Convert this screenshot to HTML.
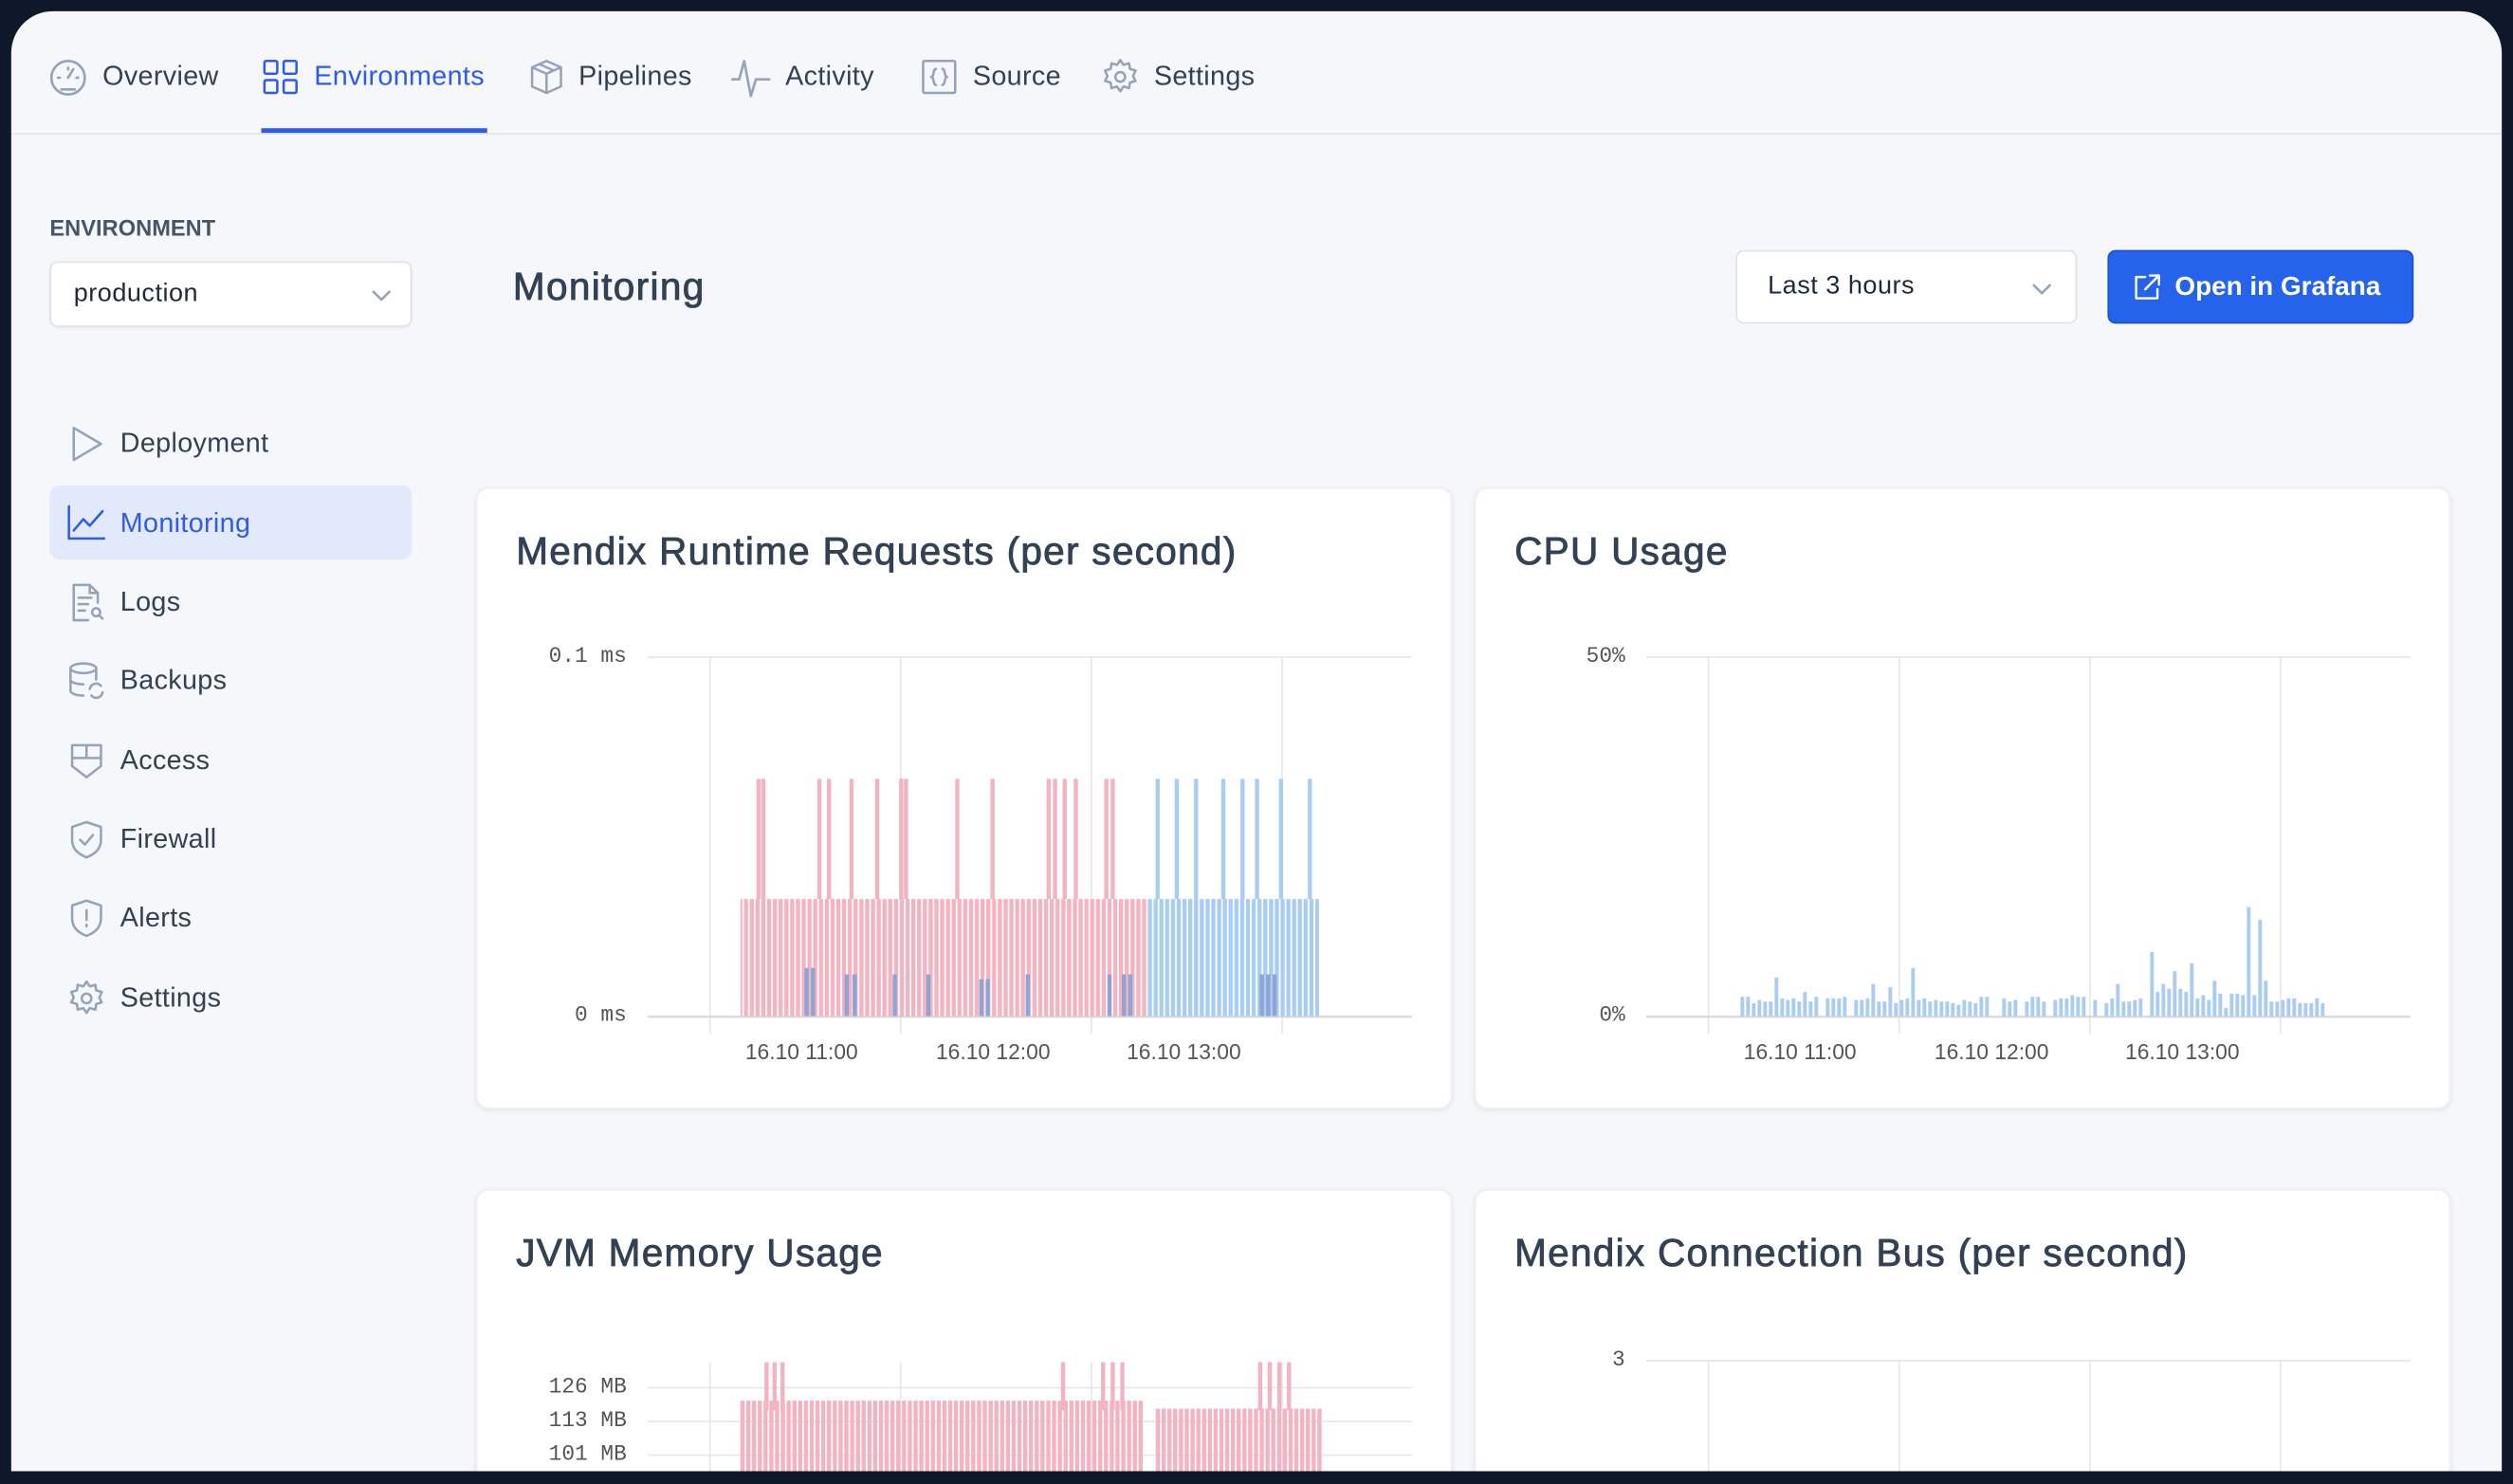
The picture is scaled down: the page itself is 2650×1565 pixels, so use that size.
<!DOCTYPE html>
<html><head><meta charset="utf-8"><style>
*{box-sizing:border-box;margin:0;padding:0}
html,body{width:2650px;height:1565px;overflow:hidden;background:#0f172a}
#s{position:absolute;left:0;top:0;width:1568px;height:926px;overflow:hidden;transform:scale(1.69005);transform-origin:0 0;font-family:"Liberation Sans",sans-serif;color:#334155}
#fr{position:absolute;left:7px;top:7px;width:1554px;height:911px;background:#f5f7fa;border-radius:26px 26px 0 0;overflow:hidden}
.a{position:absolute;white-space:nowrap}
.nav{font-size:17px;color:#334155;top:31px;letter-spacing:.2px}
.ic{position:absolute;fill:none;stroke:#94a3b8;stroke-width:1.5;stroke-linecap:round;stroke-linejoin:round}
.card{position:absolute;background:#fff;border-radius:8px;box-shadow:0 1px 3px rgba(15,23,42,.08);border:1px solid #eef0f3;overflow:hidden}
.ct{font-size:24px;color:#334155;position:absolute;left:24px;top:26px;letter-spacing:.75px;-webkit-text-stroke:.5px #334155}
.side{font-size:17px;color:#334155;left:68px;letter-spacing:.2px}
.mono{font-family:"Liberation Mono",monospace;font-size:13.5px;color:#555;text-align:right;width:80px}
.xl{font-size:13.5px;color:#555}
</style></head><body><div id="s"><div id="fr">
<svg class="ic" style="left:23px;top:29px" width="25" height="25" viewBox="0 0 24 24"><circle cx="12" cy="12" r="10"/><path d="M12 12l3-5M8 19h8M6 12h1M17 12h1M12 6v1"/></svg>
<div class="a nav" style="left:57px">Overview</div>
<svg class="ic" style="left:156px;top:29px;stroke:#2f5bea" width="24" height="24" viewBox="0 0 24 24"><rect x="2" y="2" width="8" height="8" rx="1"/><rect x="14" y="2" width="8" height="8" rx="1"/><rect x="2" y="14" width="8" height="8" rx="1"/><rect x="14" y="14" width="8" height="8" rx="1"/></svg>
<div class="a nav" style="left:189px;color:#2f5bea">Environments</div>
<div class="a" style="left:156px;top:73px;width:141px;height:3px;background:#2f5bea"></div>
<svg class="ic" style="left:322px;top:29px" width="24" height="24" viewBox="0 0 24 24"><path d="M12 2l9 4v12l-9 4-9-4V6z M3 6l9 4 9-4M12 10v12M7.5 4l9 4"/></svg>
<div class="a nav" style="left:354px">Pipelines</div>
<svg class="ic" style="left:449px;top:29px" width="25" height="25" viewBox="0 0 24 24"><path d="M1 13h4l3-11 4 21 3-10h8"/></svg>
<div class="a nav" style="left:483px">Activity</div>
<svg class="ic" style="left:567px;top:29px" width="24" height="24" viewBox="0 0 24 24"><rect x="2" y="2" width="20" height="20" rx="1"/><path d="M10 7c-2 0-1 5-3 5 2 0 1 5 3 5M14 7c2 0 1 5 3 5-2 0-1 5-3 5"/></svg>
<div class="a nav" style="left:600px">Source</div>
<svg class="ic" style="left:680px;top:29px" width="24" height="24" viewBox="0 0 24 24"><circle cx="12" cy="12" r="3"/><path d="M12 1.5l2 3 3.5-1 .5 3.5 3.5 1-1.5 3.5 1.5 3-3.5 1-.5 3.5-3.5-1-2 3-2-3-3.5 1-.5-3.5-3.5-1 1.5-3-1.5-3.5 3.5-1 .5-3.5 3.5 1z"/></svg>
<div class="a nav" style="left:713px">Settings</div>
<div class="a" style="left:0;top:76px;width:1554px;height:1px;background:#e2e5ea"></div>
<div class="a" style="left:24px;top:127px;font-size:14px;color:#475569;font-weight:600">ENVIRONMENT</div>
<div class="a" style="left:24px;top:156px;width:226px;height:41px;background:#fff;border:1px solid #dfe3e8;border-radius:5px;box-shadow:0 1px 2px rgba(0,0,0,.05)"><span class="a" style="left:14px;top:11px;font-size:16px;color:#1e293b;letter-spacing:.3px">production</span><svg class="ic" style="left:200px;top:15px" width="12" height="10" viewBox="0 0 12 10"><path d="M1 3l5 5 5-5"/></svg></div>
<svg class="ic" style="left:35px;top:258px" width="24" height="24" viewBox="0 0 24 24"><path d="M4 2l17 10L4 22z"/></svg>
<div class="a side" style="top:260px">Deployment</div>
<div class="a" style="left:24px;top:296px;width:226px;height:46px;background:#e2e9fb;border-radius:6px"></div>
<svg class="ic" style="left:35px;top:307px;stroke:#2f5bea" width="24" height="24" viewBox="0 0 24 24"><path d="M1 2v20h22M4 17l6-7 4 4 8-9"/></svg>
<div class="a side" style="top:310px;color:#2f5bea">Monitoring</div>
<svg class="ic" style="left:35px;top:357px" width="24" height="24" viewBox="0 0 24 24"><path d="M14 1H4v22h9M14 1l5 5v6M14 1v5h5M7 9h8M7 13h6M7 17h4"/><circle cx="18" cy="18" r="2.5"/><path d="M20 20l2 2"/></svg>
<div class="a side" style="top:359px">Logs</div>
<svg class="ic" style="left:35px;top:406px" width="24" height="24" viewBox="0 0 24 24"><ellipse cx="10" cy="4" rx="8" ry="3"/><path d="M2 4v14c0 1.7 3.6 3 8 3M18 4v7M2 11c0 1.7 3.6 3 8 3"/><path d="M14 17a4 4 0 0 1 7-2M22 19a4 4 0 0 1-7 2"/></svg>
<div class="a side" style="top:408px">Backups</div>
<svg class="ic" style="left:35px;top:456px" width="24" height="24" viewBox="0 0 24 24"><path d="M3 2h18v13l-9 7-9-7zM3 10h18M12 2v8"/></svg>
<div class="a side" style="top:458px">Access</div>
<svg class="ic" style="left:35px;top:505px" width="24" height="24" viewBox="0 0 24 24"><path d="M12 1l9 3v8c0 6-4 9-9 11-5-2-9-5-9-11V4z M8 12l3 3 5-6"/></svg>
<div class="a side" style="top:507px">Firewall</div>
<svg class="ic" style="left:35px;top:554px" width="24" height="24" viewBox="0 0 24 24"><path d="M12 1l9 3v8c0 6-4 9-9 11-5-2-9-5-9-11V4z M12 7v6M12 16v1"/></svg>
<div class="a side" style="top:556px">Alerts</div>
<svg class="ic" style="left:35px;top:604px" width="24" height="24" viewBox="0 0 24 24"><circle cx="12" cy="12" r="3"/><path d="M12 1.5l2 3 3.5-1 .5 3.5 3.5 1-1.5 3.5 1.5 3-3.5 1-.5 3.5-3.5-1-2 3-2-3-3.5 1-.5-3.5-3.5-1 1.5-3-1.5-3.5 3.5-1 .5-3.5 3.5 1z"/></svg>
<div class="a side" style="top:606px">Settings</div>
<div class="a" style="left:313px;top:159px;font-size:24px;color:#334155;letter-spacing:.8px;-webkit-text-stroke:.5px #334155">Monitoring</div>
<div class="a" style="left:1076px;top:149px;width:213px;height:46px;background:#fff;border:1px solid #dfe3e8;border-radius:5px"><span class="a" style="left:19px;top:13px;font-size:16px;color:#1e293b;letter-spacing:.3px">Last 3 hours</span><svg class="ic" style="left:184px;top:18px" width="12" height="10" viewBox="0 0 12 10"><path d="M1 3l5 5 5-5"/></svg></div>
<div class="a" style="left:1308px;top:149px;width:191px;height:46px;background:#2563eb;border:1px solid #1d4ed8;border-radius:5px"><svg class="ic" style="left:14px;top:13px;stroke:#fff" width="19" height="19" viewBox="0 0 20 20"><path d="M9 3H3v14h14v-6M12 2h6v6M18 2l-9 9"/></svg><span class="a" style="left:41px;top:13px;font-size:16.5px;color:#fff;font-weight:600">Open in Grafana</span></div>
<div class="card" style="left:290px;top:297px;width:609px;height:388px"><div class="ct">Mendix Runtime Requests (per second)</div></div>
<div class="card" style="left:913px;top:297px;width:609px;height:388px"><div class="ct">CPU Usage</div></div>
<div class="card" style="left:290px;top:735px;width:609px;height:200px"><div class="ct">JVM Memory Usage</div></div>
<div class="card" style="left:913px;top:735px;width:609px;height:200px"><div class="ct">Mendix Connection Bus (per second)</div></div>
<svg class="a" style="left:0;top:0" width="1554" height="911">
<defs>
<pattern id="pk" width="3.6" height="10" patternUnits="userSpaceOnUse"><rect width="2.6" height="10" fill="#f4b3c0"/></pattern>
<pattern id="bl" width="3.6" height="10" patternUnits="userSpaceOnUse"><rect width="2.6" height="10" fill="#a9cdf2"/></pattern>
</defs>
<g stroke="#e5e7eb" stroke-width="1">
<path d="M397 403H874M436 403V638M555 403V638M674 403V638M793 403V638"/>
<path d="M1020 403H1497M1059 403V638M1178 403V638M1297 403V638M1416 403V638"/>
<path d="M397 859H874M397 880H874M397 901H874M436 843V911M555 843V911M674 843V911M793 843V911"/>
<path d="M1020 842H1497M1059 842V911M1178 842V911M1297 842V911M1416 842V911"/>
</g>
<g stroke="#d4d6da" stroke-width="1.3"><path d="M397 627.5H874M1020 627.5H1497"/></g>
<rect x="455" y="554" width="254" height="73" fill="url(#pk)"/>
<rect x="709" y="554" width="107" height="73" fill="url(#bl)"/>
<g id="sp"></g><g id="cpu"></g><g id="jvm"></g>
</svg>
<div class="a mono" style="left:304px;top:396px">0.1 ms</div>
<div class="a mono" style="left:304px;top:620px">0 ms</div>
<div class="a xl" style="left:458px;top:642px">16.10 11:00</div><div class="a xl" style="left:577px;top:642px">16.10 12:00</div><div class="a xl" style="left:696px;top:642px">16.10 13:00</div>
<div class="a mono" style="left:927px;top:396px">50%</div>
<div class="a mono" style="left:927px;top:620px">0%</div>
<div class="a xl" style="left:1081px;top:642px">16.10 11:00</div><div class="a xl" style="left:1200px;top:642px">16.10 12:00</div><div class="a xl" style="left:1319px;top:642px">16.10 13:00</div>
<div class="a mono" style="left:304px;top:852px">126 MB</div>
<div class="a mono" style="left:304px;top:873px">113 MB</div>
<div class="a mono" style="left:304px;top:894px">101 MB</div>
<div class="a mono" style="left:927px;top:835px">3</div>
</div></div>
<script>
var ns="http://www.w3.org/2000/svg";
function r(g,x,y,w,h,c){var e=document.createElementNS(ns,"rect");e.setAttribute("x",x);e.setAttribute("y",y);e.setAttribute("width",w);e.setAttribute("height",h);e.setAttribute("fill",c);document.getElementById(g).appendChild(e);}
var sp=[465,468,503,509,523,539,554,557,589,611,646,650,656,663,682,686,714,726,738,755,767,776,791,809];
sp.forEach(function(x){r("sp",x,479,2.6,75,x>=709?"#a9cdf2":"#f4b3c0")});
[[495,597],[499,597],[520,601],[525,601],[550,601],[571,601],[604,604],[608,604],[633,601],[684,601],[693,601],[697,601],[779,601],[783,601],[787,601]].forEach(function(a){r("sp",a[0],a[1],2.6,627-a[1],"#8fa3d4")});
var h=[12,12,8,10,9,9,24,11,10,11,9,15,9,12,0,11,11,11,12,0,10,10,11,20,9,9,18,8,10,11,30,10,11,9,10,9,9,8,7,10,9,8,12,12,0,0,11,9,10,0,9,12,12,9,0,10,11,11,13,12,12,0,10,0,8,11,20,9,9,10,11,0,40,15,20,17,28,17,15,33,11,13,10,22,14,5,14,14,13,68,13,60,22,9,9,10,11,11,8,8,8,11,8];
h.forEach(function(v,i){if(v)r("cpu",1079+i*3.55,627-v,2.3,v,"#a9cdf2")});
for(var x=455;x<816;x+=3.6){if(x>706&&x<712)continue;var t=x>712?872:867;r("jvm",x,t,2.6,60,"#f4b3c0");}
[470,475,480,655,680,686,692,778,784,790,796].forEach(function(x){r("jvm",x,843,2.6,30,"#f4b3c0")});
</script>
</body></html>
